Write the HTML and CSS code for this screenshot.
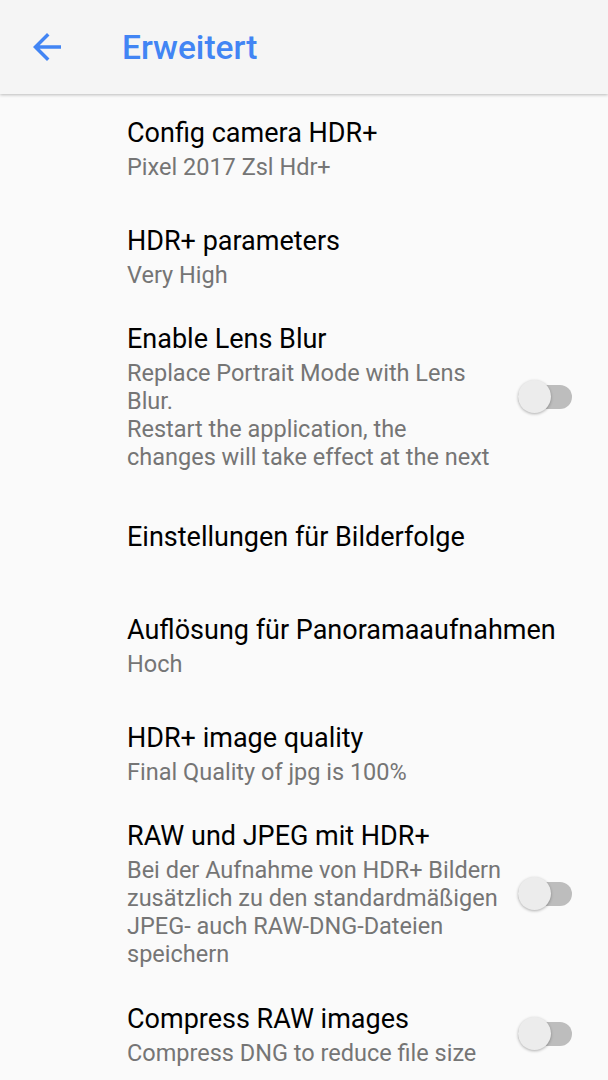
FILE: index.html
```html
<!DOCTYPE html>
<html>
<head>
    <meta charset="UTF-8">
    <meta name="viewport" content="width=device-width, initial-scale=1.0">
    <title>Erweitert</title>
    <link rel="stylesheet" href="styles.css">
</head>
<body>

    <!-- Toolbar -->
    <div class="toolbar">
        <div class="back">
            <svg width="42" height="42" viewBox="0 0 24 24">
                <path d="M20 11H7.83l5.59-5.59L12 4l-8 8 8 8 1.41-1.41L7.83 13H20v-2z" fill="#4285f4"/>
            </svg>
        </div>
        <h1 class="toolbar-title">Erweitert</h1>
    </div>

    <!-- Preference list -->
    <div class="prefs">
        <div class="pref">
            <div class="pref-text">
                <div class="pref-title">Config camera HDR+</div>
                <div class="pref-summary">Pixel 2017 Zsl Hdr+</div>
            </div>
        </div>
        <div class="pref">
            <div class="pref-text">
                <div class="pref-title">HDR+ parameters</div>
                <div class="pref-summary">Very High</div>
            </div>
        </div>
        <div class="pref">
            <div class="pref-text">
                <div class="pref-title">Enable Lens Blur</div>
                <div class="pref-summary">Replace Portrait Mode with Lens Blur.<br>Restart the application, the<br>changes will take effect at the next</div>
            </div>
            <div class="switch"><div class="thumb"></div></div>
        </div>
        <div class="pref">
            <div class="pref-text">
                <div class="pref-title">Einstellungen für Bilderfolge</div>
            </div>
        </div>
        <div class="pref">
            <div class="pref-text">
                <div class="pref-title">Auflösung für Panoramaaufnahmen</div>
                <div class="pref-summary">Hoch</div>
            </div>
        </div>
        <div class="pref">
            <div class="pref-text">
                <div class="pref-title">HDR+ image quality</div>
                <div class="pref-summary">Final Quality of jpg is 100%</div>
            </div>
        </div>
        <div class="pref">
            <div class="pref-text">
                <div class="pref-title">RAW und JPEG mit HDR+</div>
                <div class="pref-summary">Bei der Aufnahme von HDR+ Bildern zusätzlich zu den standardmäßigen JPEG- auch RAW-DNG-Dateien speichern</div>
            </div>
            <div class="switch"><div class="thumb"></div></div>
        </div>
        <div class="pref">
            <div class="pref-text">
                <div class="pref-title">Compress RAW images</div>
                <div class="pref-summary">Compress DNG to reduce file size</div>
            </div>
            <div class="switch"><div class="thumb"></div></div>
        </div>
    </div>

</body>
</html>
```

FILE: styles.css
```css
/* Android settings look */
body {
    margin: 0;
    background-color: #fafafa;
    font-family: Roboto, "Noto Sans", sans-serif;
    overflow: hidden;
}

/* Toolbar */
.toolbar {
    position: relative;
    z-index: 1;
    display: flex;
    align-items: center;
    height: 94px;
    background-color: #f5f5f5;
    box-shadow: 0 1px 3px rgba(0, 0, 0, 0.25);
}
.back {
    width: 42px;
    height: 42px;
    margin-left: 26px;
}
.back svg {
    display: block;
}
.toolbar-title {
    margin: 0 0 0 54px;
    font-size: 33.5px;
    font-weight: 500;
    color: #4285f4;
}

/* Preference rows */
.pref {
    display: flex;
    align-items: center;
    box-sizing: border-box;
    min-height: 108px;
    padding: 12px 36px 12px 127px;
}
.pref-text {
    flex: 1;
    min-width: 0;
}
.pref-title {
    font-size: 27px;
    line-height: 34px;
    color: #000000;
}
.pref-summary {
    margin-top: 3px;
    font-size: 23.5px;
    line-height: 28px;
    color: #757575;
}

/* Switch (off) */
.switch {
    position: relative;
    flex: none;
    width: 54px;
    height: 24px;
    margin-left: 14px;
    border-radius: 12px;
    background-color: #bdbdbd;
}
.thumb {
    position: absolute;
    left: 0;
    top: -5px;
    width: 33px;
    height: 33px;
    border-radius: 50%;
    background-color: #ececec;
    box-shadow: 0 1px 3px rgba(0, 0, 0, 0.3);
}
```
